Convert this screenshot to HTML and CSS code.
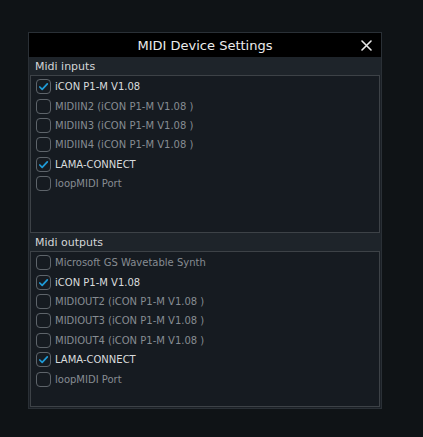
FILE: index.html
```html
<!DOCTYPE html>
<html>
<head>
<meta charset="utf-8">
<link rel="stylesheet" href="styles.css">
</head>
<body>
<div class="window">
  <div class="titlebar">
    <span class="title">MIDI Device Settings</span>
    <span class="close"><svg width="11" height="11" viewBox="0 0 11 11"><path d="M1 1 L10 10 M10 1 L1 10" stroke="#e8e8e8" stroke-width="1.6" stroke-linecap="round"/></svg></span>
  </div>
  <div class="section-header">Midi inputs</div>
  <div class="list list-inputs">
    <div class="row on"><span class="box"><svg width="11" height="9" viewBox="0 0 11 9"><path d="M1.8 5 L4.2 7.3 L9.3 1.8" fill="none" stroke="#1f9bd8" stroke-width="1.7" stroke-linecap="round" stroke-linejoin="round"/></svg></span><span class="label">iCON P1-M V1.08</span></div>
    <div class="row"><span class="box"></span><span class="label">MIDIIN2 (iCON P1-M V1.08 )</span></div>
    <div class="row"><span class="box"></span><span class="label">MIDIIN3 (iCON P1-M V1.08 )</span></div>
    <div class="row"><span class="box"></span><span class="label">MIDIIN4 (iCON P1-M V1.08 )</span></div>
    <div class="row on"><span class="box"><svg width="11" height="9" viewBox="0 0 11 9"><path d="M1.8 5 L4.2 7.3 L9.3 1.8" fill="none" stroke="#1f9bd8" stroke-width="1.7" stroke-linecap="round" stroke-linejoin="round"/></svg></span><span class="label">LAMA-CONNECT</span></div>
    <div class="row"><span class="box"></span><span class="label">loopMIDI Port</span></div>
  </div>
  <div class="section-header">Midi outputs</div>
  <div class="list list-outputs">
    <div class="row"><span class="box"></span><span class="label">Microsoft GS Wavetable Synth</span></div>
    <div class="row on"><span class="box"><svg width="11" height="9" viewBox="0 0 11 9"><path d="M1.8 5 L4.2 7.3 L9.3 1.8" fill="none" stroke="#1f9bd8" stroke-width="1.7" stroke-linecap="round" stroke-linejoin="round"/></svg></span><span class="label">iCON P1-M V1.08</span></div>
    <div class="row"><span class="box"></span><span class="label">MIDIOUT2 (iCON P1-M V1.08 )</span></div>
    <div class="row"><span class="box"></span><span class="label">MIDIOUT3 (iCON P1-M V1.08 )</span></div>
    <div class="row"><span class="box"></span><span class="label">MIDIOUT4 (iCON P1-M V1.08 )</span></div>
    <div class="row on"><span class="box"><svg width="11" height="9" viewBox="0 0 11 9"><path d="M1.8 5 L4.2 7.3 L9.3 1.8" fill="none" stroke="#1f9bd8" stroke-width="1.7" stroke-linecap="round" stroke-linejoin="round"/></svg></span><span class="label">LAMA-CONNECT</span></div>
    <div class="row"><span class="box"></span><span class="label">loopMIDI Port</span></div>
  </div>
</div>
</body>
</html>
```
FILE: styles.css
```css
html, body {
  margin: 0;
  padding: 0;
  background: #0f1316;
}
html { height: 100%; }
body {
  min-height: 100%;
  box-sizing: border-box;
  padding: 32px 0 0 28px;
  font-family: "DejaVu Sans", Verdana, sans-serif;
}
.window {
  width: 352px;
  border: 1px solid #2a3036;
  background: #1b2026;
  padding-bottom: 1px;
}
.titlebar {
  position: relative;
  height: 24px;
  background: #000;
  display: flex;
  align-items: center;
  justify-content: center;
}
.title {
  color: #ececec;
  font-size: 13px;
}
.close {
  position: absolute;
  right: 9px;
  top: 7px;
  display: flex;
}
.section-header {
  height: 18px;
  line-height: 19px;
  padding-left: 6px;
  background: #1e242a;
  color: #d4d6d8;
  font-size: 11px;
}
.list {
  margin: 0 1px;
  border: 1px solid #3d4247;
  background: #161b21;
  padding-top: 1px;
  box-sizing: border-box;
}
.list-inputs { height: 158px; }
.list-outputs { height: 156px; }
.row {
  height: 19.4px;
  display: flex;
  align-items: center;
  padding-left: 5px;
}
.box {
  width: 15px;
  height: 15px;
  box-sizing: border-box;
  border: 1.5px solid #5e646a;
  border-radius: 4px;
  display: flex;
  align-items: center;
  justify-content: center;
  flex: none;
}
.label {
  margin-left: 4px;
  font-size: 10px;
  color: #868c92;
  white-space: nowrap;
}
.row.on .label { color: #d9dbdd; }
```
